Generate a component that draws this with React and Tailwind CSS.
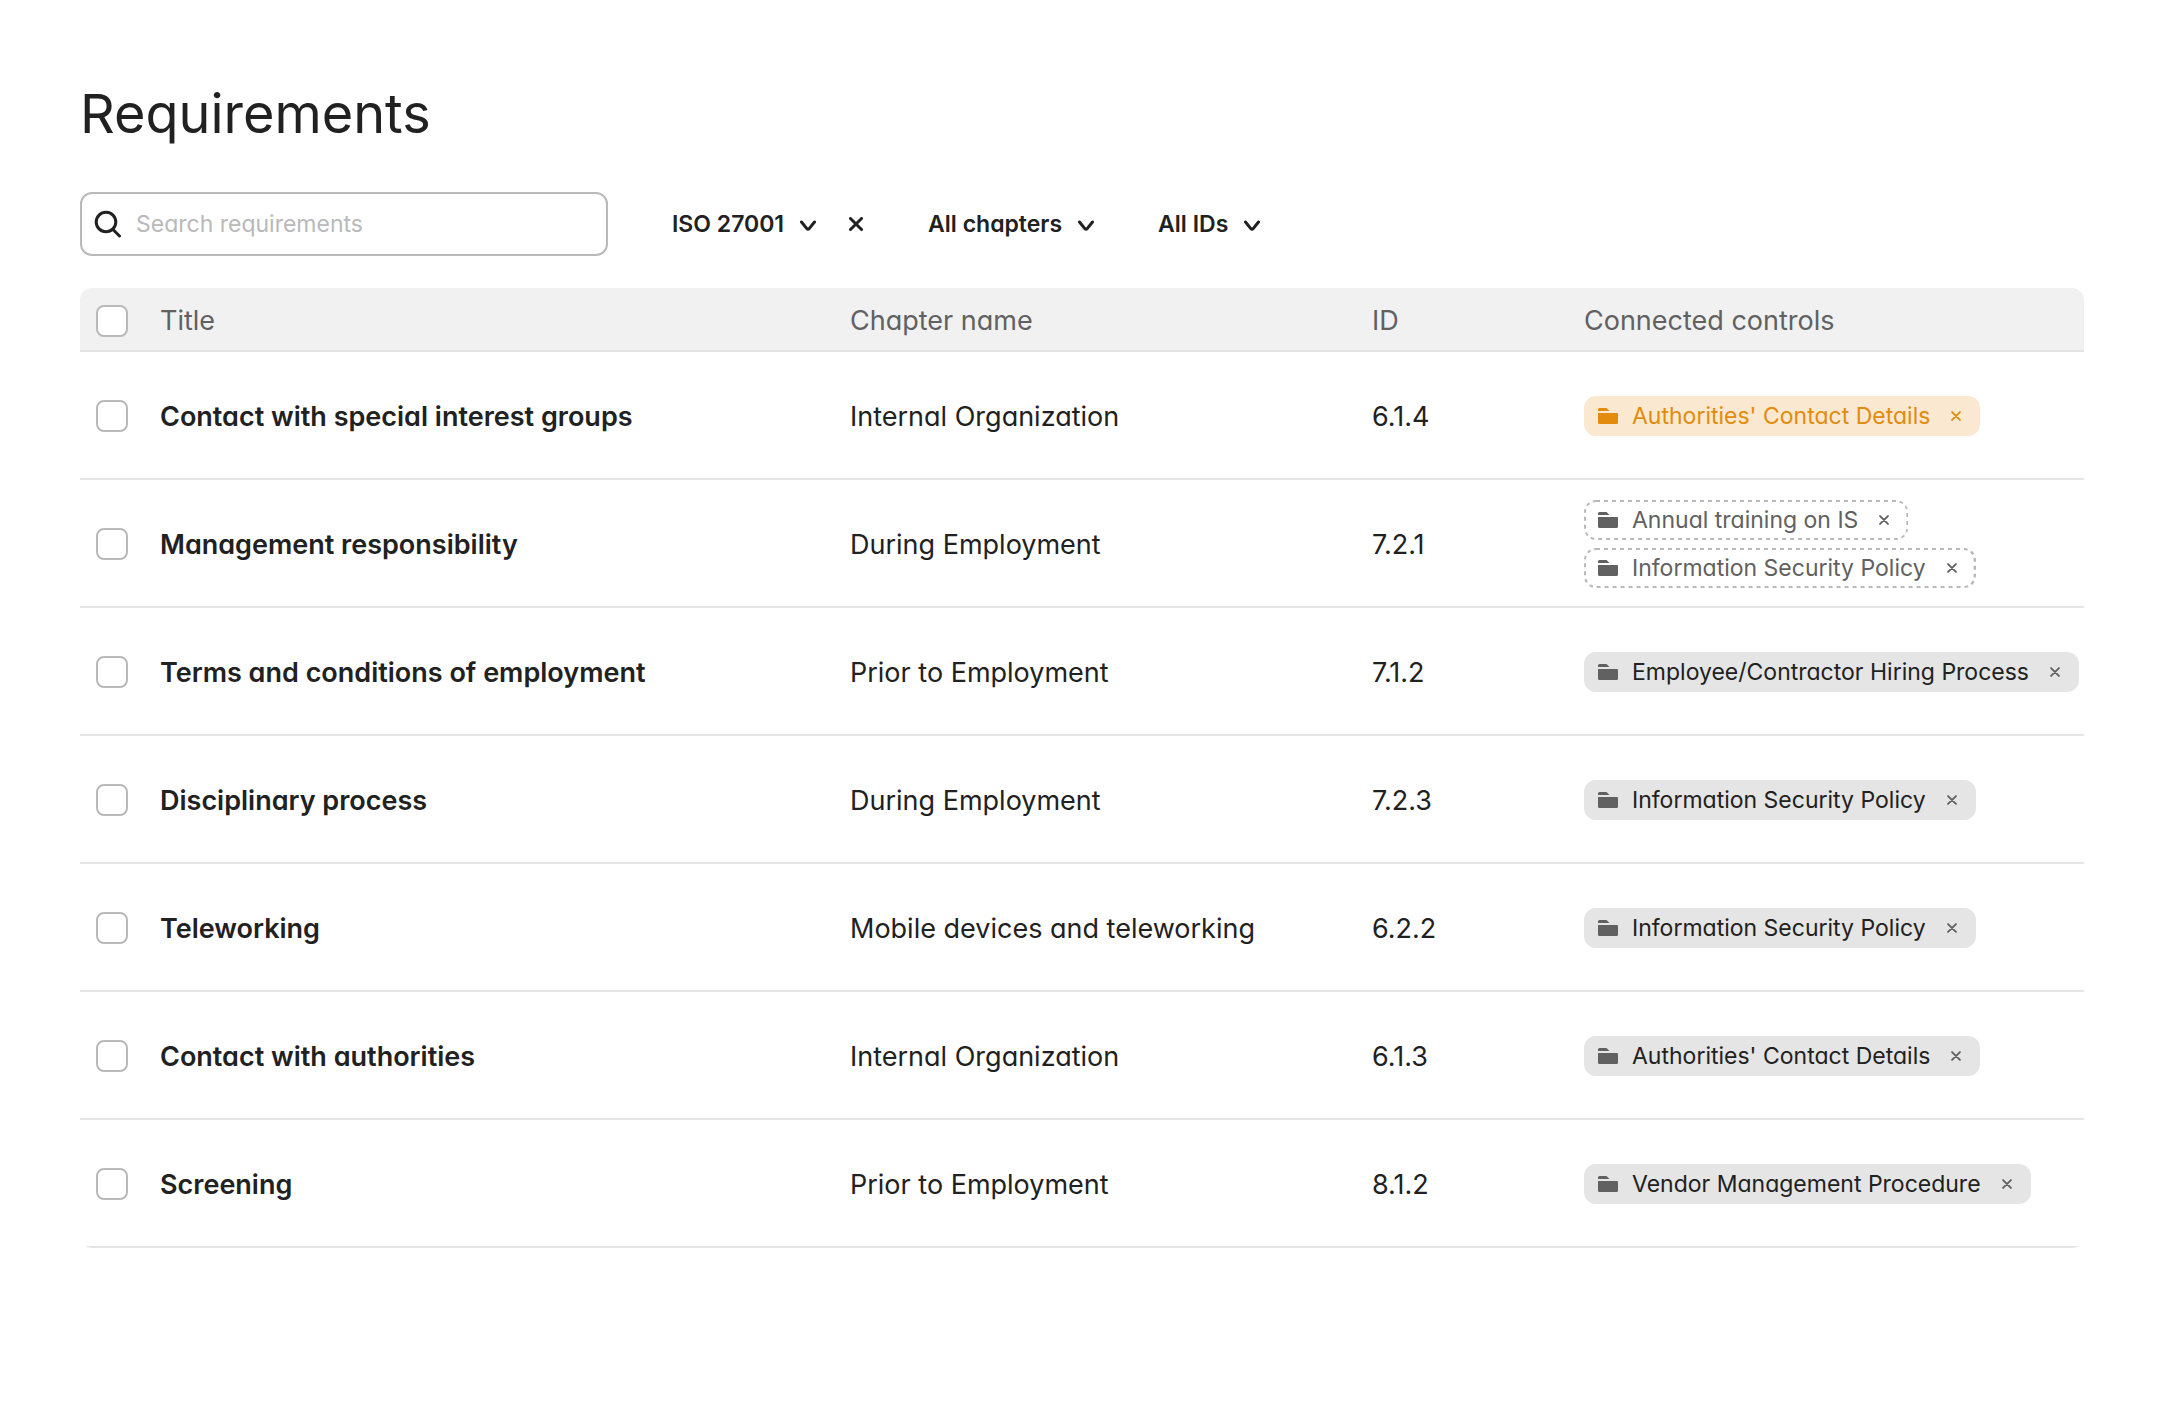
const requirements = [
  { title: "Contact with special interest groups", chapter: "Internal Organization", id: "6.1.4", controls: [{ name: "Authorities' Contact Details", tone: "warning" }] },
  {
    title: "Management responsibility",
    chapter: "During Employment",
    id: "7.2.1",
    controls: [
      { name: "Annual training on IS", tone: "draft" },
      { name: "Information Security Policy", tone: "draft" },
    ],
  },
  { title: "Terms and conditions of employment", chapter: "Prior to Employment", id: "7.1.2", controls: [{ name: "Employee/Contractor Hiring Process", tone: "default" }] },
  { title: "Disciplinary process", chapter: "During Employment", id: "7.2.3", controls: [{ name: "Information Security Policy", tone: "default" }] },
  { title: "Teleworking", chapter: "Mobile devices and teleworking", id: "6.2.2", controls: [{ name: "Information Security Policy", tone: "default" }] },
  { title: "Contact with authorities", chapter: "Internal Organization", id: "6.1.3", controls: [{ name: "Authorities' Contact Details", tone: "default" }] },
  { title: "Screening", chapter: "Prior to Employment", id: "8.1.2", controls: [{ name: "Vendor Management Procedure", tone: "default" }] },
];

const chipTones = {
  warning: "bg-[#fae9d0] text-[#e38b0c]",
  draft: "bg-white text-[#616161]",
  default: "bg-[#e5e5e5] text-[#212121]",
};

const chipIconTones = {
  warning: "text-[#e38b0c]",
  draft: "text-[#616161]",
  default: "text-[#616161]",
};

function SearchIcon() {
  return (
    <svg viewBox="0 0 28 28" className="size-7 shrink-0" fill="none" stroke="currentColor" strokeWidth="3" strokeLinecap="round" aria-hidden="true">
      <circle cx="12" cy="12" r="9.8" />
      <path d="M19.5 20L25.5 26" />
    </svg>
  );
}

function ChevronIcon() {
  return (
    <svg viewBox="0 0 16 12" className="pointer-events-none mt-1 h-3 w-4 shrink-0" fill="none" stroke="currentColor" strokeWidth="3" strokeLinecap="round" strokeLinejoin="round" aria-hidden="true">
      <path d="M1.500 2L6.800 8.600Q8 10 9.200 8.600L14.500 2" />
    </svg>
  );
}

function CrossIcon({ className, strokeWidth }) {
  return (
    <svg viewBox="0 0 14 14" className={className} fill="none" stroke="currentColor" strokeWidth={strokeWidth} strokeLinecap="round" aria-hidden="true">
      <path d="M1.5 1.5L12.5 12.5M12.5 1.5L1.5 12.5" />
    </svg>
  );
}

function FolderIcon({ className }) {
  return (
    <svg viewBox="0 0 20 16" className={className} fill="currentColor" aria-hidden="true">
      <path d="M0 2.900V1.500A1.500 1.500 0 0 1 1.500 0H8.500L11.500 2.900Z" />
      <path d="M0 5H19A1 1 0 0 1 20 6V14.500A1.500 1.500 0 0 1 18.500 16H1.500A1.500 1.500 0 0 1 0 14.500Z" />
    </svg>
  );
}

// Short even dashes; the outer half of the stroke is clipped by the chip's rounded corners.
function DashedOutline() {
  return (
    <svg className="pointer-events-none absolute inset-0 size-full" fill="none" aria-hidden="true">
      <rect width="100%" height="100%" rx="12" stroke="#b9b9b9" strokeWidth="4" strokeDasharray="4 4" />
    </svg>
  );
}

function Filter({ label, value }) {
  return (
    <label className="flex items-center">
      <select aria-label={label} defaultValue={value} className="-mr-4 cursor-pointer appearance-none bg-transparent pr-8 text-[23px] leading-8 font-semibold outline-none field-sizing-content">
        <option>{value}</option>
      </select>
      <ChevronIcon />
    </label>
  );
}

function Checkbox({ label }) {
  return <input type="checkbox" aria-label={label} className="block size-8 appearance-none rounded-lg border-2 border-[#b9b9b9] bg-white checked:bg-[#212121]" />;
}

function Chip({ name, tone }) {
  return (
    <li className={`relative flex h-10 items-center overflow-hidden rounded-xl px-3.5 whitespace-nowrap ${chipTones[tone]}`}>
      {tone === "draft" && <DashedOutline />}
      <FolderIcon className={`h-4 w-5 shrink-0 ${chipIconTones[tone]}`} />
      <span className="ml-3.5 text-[23px] leading-8">{name}</span>
      <button type="button" aria-label={`Remove ${name}`} className={`ml-4 flex h-8 w-5 items-center justify-center ${chipIconTones[tone]}`}>
        <CrossIcon className="size-2.5" strokeWidth="2.6" />
      </button>
    </li>
  );
}

export default function App() {
  return (
    <main className="bg-white px-20 pt-20 font-['Inter',sans-serif] text-[#212121] [font-feature-settings:'cv11']">
      <h1 className="text-[54px] leading-17">Requirements</h1>

      <form className="mt-11 flex items-center" onSubmit={(event) => event.preventDefault()}>
        <label className="flex h-16 w-[528px] items-center rounded-xl border-2 border-[#b9b9b9] px-3">
          <SearchIcon />
          <input type="search" aria-label="Search requirements" placeholder="Search requirements" className="ml-3.5 min-w-0 flex-1 bg-transparent text-[23px] leading-8 outline-none placeholder:text-[#b9b9b9]" />
        </label>
        <div className="ml-16 flex items-center">
          <Filter label="Standard" value="ISO 27001" />
          <button type="button" aria-label="Clear standard filter" className="ml-6 flex size-8 items-center justify-center">
            <CrossIcon className="size-3.5" strokeWidth="3" />
          </button>
        </div>
        <div className="ml-14 flex items-center gap-16">
          <Filter label="Chapter" value="All chapters" />
          <Filter label="ID" value="All IDs" />
        </div>
      </form>

      <div className="mt-8 overflow-hidden rounded-xl">
        <table className="w-full table-fixed border-separate border-spacing-0 text-left text-[27px] leading-8 [&_td]:border-b-2 [&_td]:border-[#e5e5e5] [&_th]:border-b-2 [&_th]:border-[#e5e5e5]">
          <colgroup>
            <col className="w-20" />
            <col className="w-[690px]" />
            <col className="w-[522px]" />
            <col className="w-[212px]" />
            <col />
          </colgroup>
          <thead className="text-[#616161]">
            <tr className="h-16 [&>th]:bg-[#f1f1f1] [&>th]:pt-1 [&>th]:font-normal">
              <th className="pl-4">
                <Checkbox label="Select all requirements" />
              </th>
              <th>Title</th>
              <th>Chapter name</th>
              <th>ID</th>
              <th>Connected controls</th>
            </tr>
          </thead>
          <tbody>
            {requirements.map((row) => (
              <tr key={row.title} className="h-32">
                <td className="pt-0.5 pl-4">
                  <Checkbox label={`Select ${row.title}`} />
                </td>
                <td className="pt-1 font-semibold">{row.title}</td>
                <td className="pt-1">{row.chapter}</td>
                <td className="pt-1">{row.id}</td>
                <td className="pt-0.5">
                  <ul className="flex flex-col items-start gap-2">
                    {row.controls.map((control) => (
                      <Chip key={control.name} {...control} />
                    ))}
                  </ul>
                </td>
              </tr>
            ))}
          </tbody>
        </table>
      </div>
    </main>
  );
}
